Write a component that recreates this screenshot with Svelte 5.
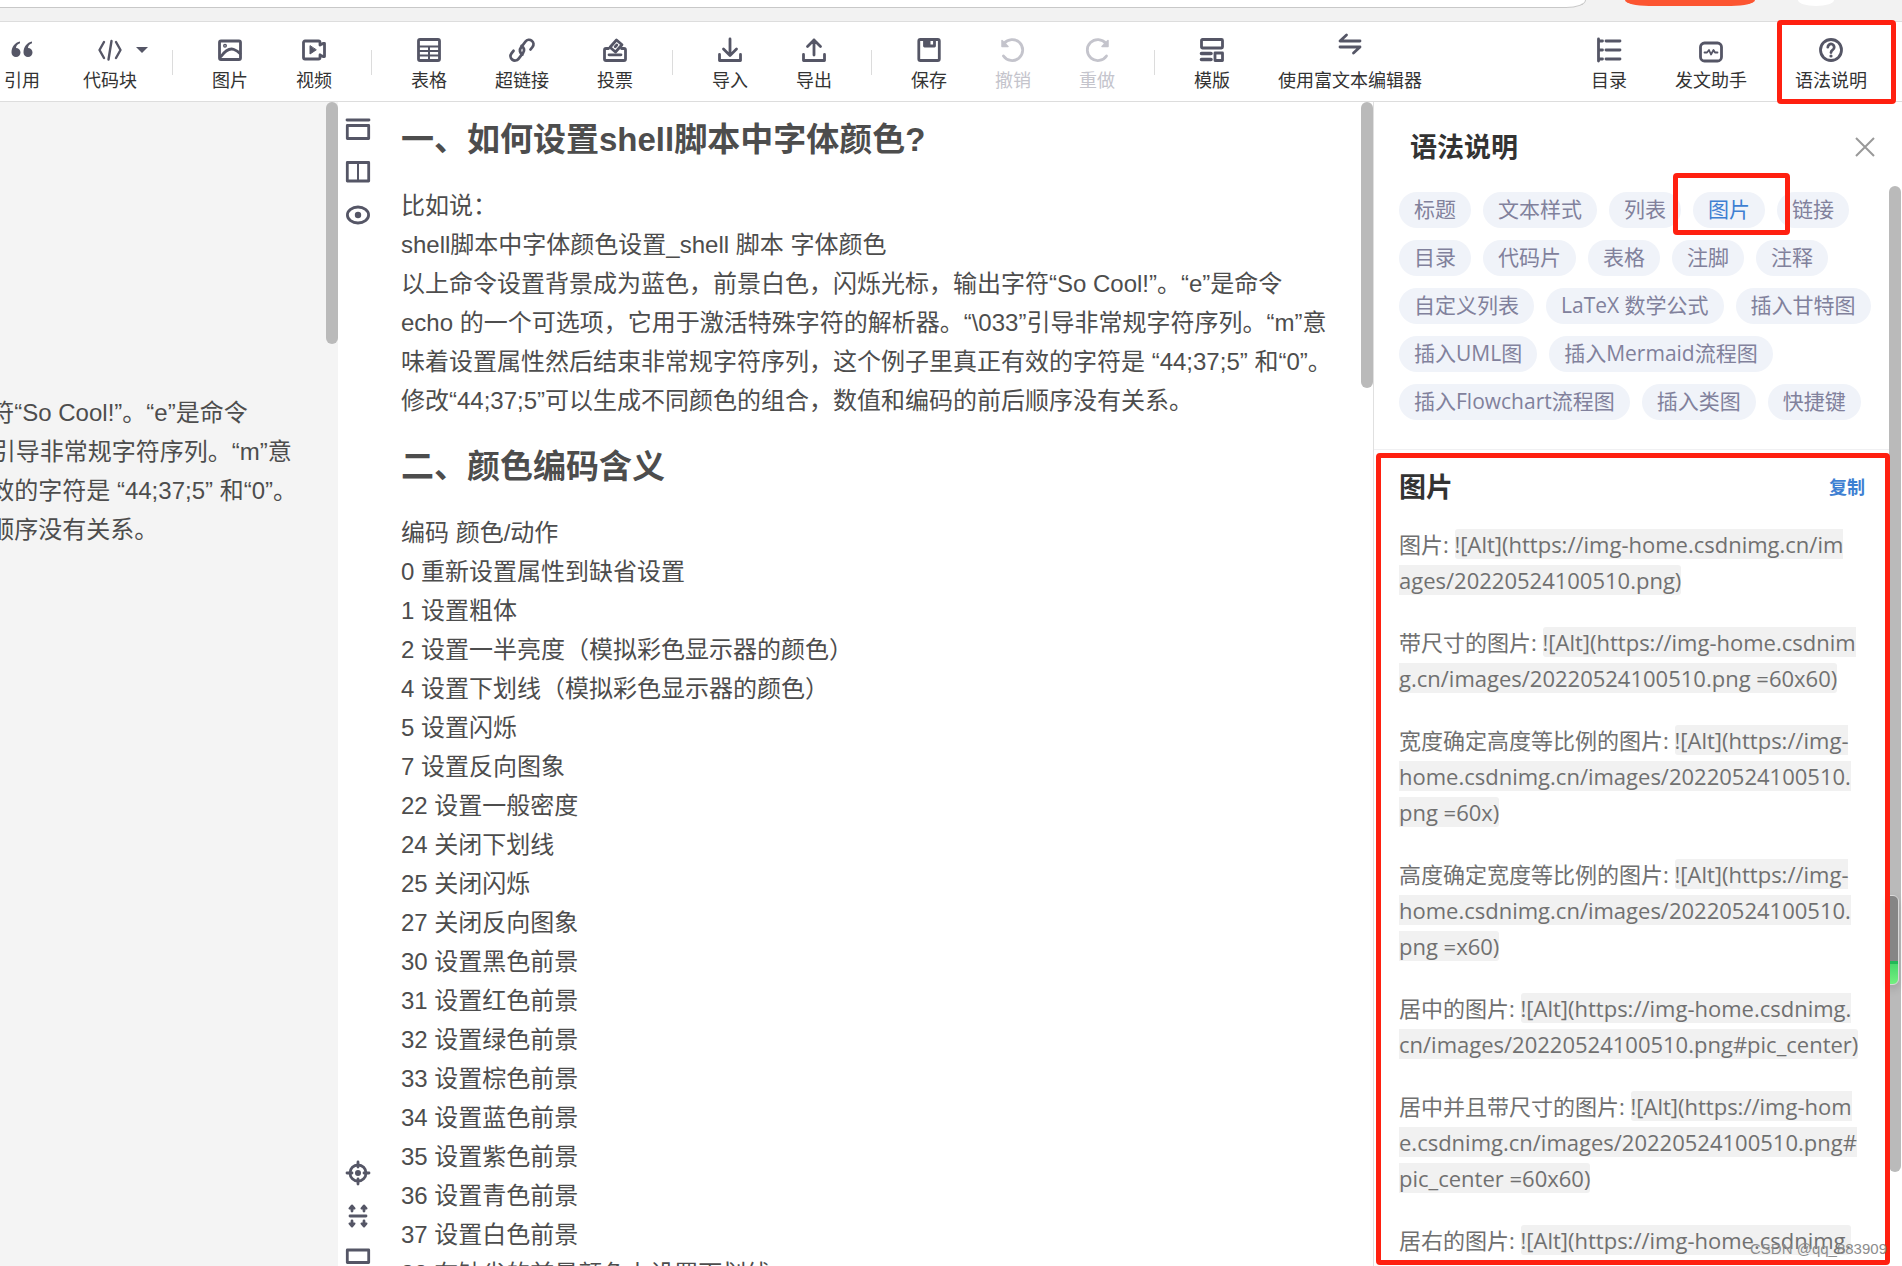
<script lang="ts">
	type Tool = { label: string; icon: string; disabled?: boolean; caret?: boolean; raised?: boolean; marked?: boolean };

	const icons: Record<string, string> = {
		quote:
			'<g fill="currentColor" stroke="none"><path d="M10 3.5C5 4.5 1.500 9 1.500 14.500a4.500 4.500 0 1 0 4.500-4.500C6.200 7.500 7.600 6 10 5.300z"/><path d="M22 3.500c-5 1-8.500 5.500-8.500 11a4.500 4.500 0 1 0 4.500-4.500c.2-2.500 1.600-4 4-4.700z"/></g>',
		code: '<path d="M6 4 1.500 12 6 20M18 4l4.500 8-4.500 8M13.500 3l-3 18.500" stroke-width="2.400"/>',
		image:
			'<rect x="1.500" y="3" width="21" height="18.500" rx="1.500"/><circle cx="7" cy="7.800" r="1.300" stroke-width="1.400"/><path d="M3 18.500c4-5.500 9-8.500 13-7 2.500 1 4.500 2.500 6 4"/>',
		video:
			'<path d="M18 7V4.500A1.500 1.500 0 0 0 16.500 3H3a1.500 1.500 0 0 0-1.500 1.500v15A1.500 1.500 0 0 0 3 21h13.500a1.500 1.500 0 0 0 1.500-1.500V17M18 7l3-1.500h1.500v13H21L18 17"/><path d="M8 8v8l6-4z" fill="currentColor" stroke-width="1"/>',
		table:
			'<rect x="1.500" y="1.500" width="21" height="21" rx="1.500"/><path d="M2 8.500h20M2 13h20M2 17.500h20M12 9v13" stroke-width="2"/>',
		link:
			'<path d="M12.500 16.500a4.500 4.500 0 0 1-1.500-7l4.500-6a4.400 4.400 0 0 1 7 5.500l-2 2.500M11.500 8a4.500 4.500 0 0 1 1.500 7l-4.500 5.800a4.400 4.400 0 0 1-7-5.500l2-2.500"/>',
		vote:
			'<path d="M5.500 10.500H3A1.500 1.500 0 0 0 1.500 12v9A1.500 1.500 0 0 0 3 22.500h18a1.500 1.500 0 0 0 1.500-1.500v-9a1.500 1.500 0 0 0-1.500-1.500h-2.500M6 16.800h12"/><path d="m13.500 2 5.500 4.700-6.500 7.300L7 9.300zM12.200 8.700l1.600-1.600"/>',
		import: '<path d="M12 1v16M5.500 11l6.500 6.500 6.500-6.500M1.500 16.500v6h21v-6"/>',
		export: '<path d="M12 17V2M5.500 8.500 12 2l6.500 6.500M1.500 16.500v6h21v-6"/>',
		save:
			'<rect x="1.800" y="1.500" width="20.500" height="21" rx="1.500"/><path d="M7.500 2v6h10V2"/><path d="M7.500 2h6v6h-6z" fill="currentColor" stroke="none"/>',
		undo: '<path d="M3 5.500a10.500 10.500 0 1 1-.5 12.500"/><path d="M1 2.500v6h6z" fill="currentColor" stroke-width="1.500"/>',
		redo: '<path d="M21 5.500a10.500 10.500 0 1 0 .5 12.500"/><path d="M23 2.500v6h-6z" fill="currentColor" stroke-width="1.500"/>',
		template:
			'<rect x="1.500" y="1.500" width="21" height="8.500" rx="1"/><path d="M1.500 15.500h9.500M1.500 21.500h9.500" stroke-width="3.600"/><rect x="15" y="15" width="7.500" height="7.500"/>',
		swap: '<path d="M22 9H2l6.500-6M2 15h20l-6.500 6"/>',
		toc: '<path d="M1.500 1v22M1.500 3h4M1.500 12h4M1.500 21h4M9 3h14M9 12h14M9 21h14"/>',
		assistant:
			'<rect x="1.500" y="5" width="21" height="18" rx="4"/><path d="M5.500 14.500H8l2-2.500 2 4.500 2.500-4.500 1.500 2.500h2.500" stroke-width="1.800"/>',
		help: '<circle cx="12" cy="12" r="10.500"/><path d="M8.800 9.200a3.200 3.200 0 1 1 4.900 2.700c-1.100.7-1.700 1.200-1.700 2.600"/><circle cx="12" cy="18" r="1.600" fill="currentColor" stroke="none"/>',
		header: '<path d="M1 3h22"/><rect x="1.300" y="8.500" width="21.400" height="13"/>',
		split: '<rect x="1.300" y="2.500" width="21.400" height="18.500"/><path d="M12 3v18" stroke-width="2"/>',
		eye: '<ellipse cx="12" cy="12" rx="10.600" ry="8"/><circle cx="12" cy="12" r="3.200" fill="currentColor" stroke="none"/>',
		target:
			'<circle cx="12" cy="12" r="8"/><circle cx="12" cy="12" r="3" fill="currentColor" stroke="none"/><path d="M12 1v5M12 18v5M1 12h5M18 12h5"/>',
		sync:
			'<path d="M4 12h16M6 7V3M18 7V3M6 17v4M18 17v4"/><path d="M6 1.500 3.500 4.500h5zM18 1.500l-2.500 3h5zM6 22.500l-2.500-3h5zM18 22.500l-2.500-3h5z" fill="currentColor" stroke-width="2"/>',
		rect: '<rect x="1.300" y="3" width="21.400" height="12.500"/>'
	};

	const groups: Tool[][] = [
		[
			{ label: '引用', icon: 'quote' },
			{ label: '代码块', icon: 'code', caret: true }
		],
		[
			{ label: '图片', icon: 'image' },
			{ label: '视频', icon: 'video' }
		],
		[
			{ label: '表格', icon: 'table' },
			{ label: '超链接', icon: 'link' },
			{ label: '投票', icon: 'vote' }
		],
		[
			{ label: '导入', icon: 'import' },
			{ label: '导出', icon: 'export' }
		],
		[
			{ label: '保存', icon: 'save' },
			{ label: '撤销', icon: 'undo', disabled: true },
			{ label: '重做', icon: 'redo', disabled: true }
		],
		[
			{ label: '模版', icon: 'template' },
			{ label: '使用富文本编辑器', icon: 'swap', raised: true }
		]
	];

	const rightTools: Tool[] = [
		{ label: '目录', icon: 'toc' },
		{ label: '发文助手', icon: 'assistant' },
		{ label: '语法说明', icon: 'help', marked: true }
	];

	const intro = [
		'比如说：',
		'shell脚本中字体颜色设置_shell 脚本 字体颜色',
		'以上命令设置背景成为蓝色，前景白色，闪烁光标，输出字符“So Cool!”。“e”是命令',
		'echo 的一个可选项，它用于激活特殊字符的解析器。“\\033”引导非常规字符序列。“m”意',
		'味着设置属性然后结束非常规字符序列，这个例子里真正有效的字符是 “44;37;5” 和“0”。',
		'修改“44;37;5”可以生成不同颜色的组合，数值和编码的前后顺序没有关系。'
	];
	const sourceLines = intro.slice(2);

	const codes = [
		'编码 颜色/动作',
		'0 重新设置属性到缺省设置',
		'1 设置粗体',
		'2 设置一半亮度（模拟彩色显示器的颜色）',
		'4 设置下划线（模拟彩色显示器的颜色）',
		'5 设置闪烁',
		'7 设置反向图象',
		'22 设置一般密度',
		'24 关闭下划线',
		'25 关闭闪烁',
		'27 关闭反向图象',
		'30 设置黑色前景',
		'31 设置红色前景',
		'32 设置绿色前景',
		'33 设置棕色前景',
		'34 设置蓝色前景',
		'35 设置紫色前景',
		'36 设置青色前景',
		'37 设置白色前景',
		'38 在缺省的前景颜色上设置下划线'
	];

	const topicRows = [
		['标题', '文本样式', '列表', '图片', '链接'],
		['目录', '代码片', '表格', '注脚', '注释'],
		['自定义列表', 'LaTeX 数学公式', '插入甘特图'],
		['插入UML图', '插入Mermaid流程图'],
		['插入Flowchart流程图', '插入类图', '快捷键']
	];
	let active = $state('图片');

	const samples = [
		{ label: '图片', code: '![Alt](https://img-home.csdnimg.cn/im\nages/20220524100510.png)' },
		{ label: '带尺寸的图片', code: '![Alt](https://img-home.csdnim\ng.cn/images/20220524100510.png =60x60)' },
		{ label: '宽度确定高度等比例的图片', code: '![Alt](https://img-\nhome.csdnimg.cn/images/20220524100510.\npng =60x)' },
		{ label: '高度确定宽度等比例的图片', code: '![Alt](https://img-\nhome.csdnimg.cn/images/20220524100510.\npng =x60)' },
		{ label: '居中的图片', code: '![Alt](https://img-home.csdnimg.\ncn/images/20220524100510.png#pic_center)' },
		{ label: '居中并且带尺寸的图片', code: '![Alt](https://img-hom\ne.csdnimg.cn/images/20220524100510.png#\npic_center =60x60)' },
		{ label: '居右的图片', code: '![Alt](https://img-home.csdnimg.' }
	];
</script>

{#snippet icon(name: string)}
	<svg class="icon" viewBox="0 0 24 24" aria-hidden="true">{@html icons[name]}</svg>
{/snippet}

{#snippet toolButton(tool: Tool)}
	<button class="tool" class:raised={tool.raised} class:with-caret={tool.caret} disabled={tool.disabled}>
		<span class="glyph">
			{@render icon(tool.icon)}
			{#if tool.caret}<span class="caret"></span>{/if}
		</span>
		<span>{tool.label}</span>
		{#if tool.marked}<span class="mark"></span>{/if}
	</button>
{/snippet}

<div class="page">
	<div class="browser-bar">
		<div class="address"></div>
		<div class="pill"></div>
		<div class="avatar"></div>
	</div>

	<header class="toolbar">
		{#each groups as group, i}
			{#if i > 0}<span class="divider"></span>{/if}
			{#each group as tool (tool.label)}
				{@render toolButton(tool)}
			{/each}
		{/each}
		<div class="right-tools">
			{#each rightTools as tool (tool.label)}
				{@render toolButton(tool)}
			{/each}
		</div>
	</header>

	<main>
		<section class="source">
			<p class="lines">{sourceLines.join('\n')}</p>
			<span class="thumb"></span>
		</section>

		<nav class="rail">
			<div class="rail-group">
				<button aria-label="标题栏">{@render icon('header')}</button>
				<button aria-label="分栏">{@render icon('split')}</button>
				<button aria-label="预览">{@render icon('eye')}</button>
			</div>
			<div class="rail-group bottom">
				<button aria-label="定位">{@render icon('target')}</button>
				<button aria-label="同步滚动">{@render icon('sync')}</button>
				<button aria-label="全屏">{@render icon('rect')}</button>
			</div>
		</nav>

		<article class="preview">
			<h1>一、如何设置shell脚本中字体颜色?</h1>
			<p class="lines">{intro.join('\n')}</p>
			<h1>二、颜色编码含义</h1>
			<p class="lines">{codes.join('\n')}</p>
			<span class="thumb long"></span>
		</article>

		<aside>
			<div class="aside-head">
				<h2>语法说明</h2>
				<button class="close" aria-label="关闭">
					<svg viewBox="0 0 20 20"><path d="M1 1l18 18M19 1 1 19" /></svg>
				</button>
			</div>
			<div class="aside-body">
				<div class="topics">
					{#each topicRows as row}
						<div class="topic-row">
							{#each row as topic (topic)}
								<button class="topic" class:active={topic === active} onclick={() => (active = topic)}>
									{topic}
									{#if topic === '图片'}<span class="mark"></span>{/if}
								</button>
							{/each}
						</div>
					{/each}
				</div>
				<section class="samples">
					<div class="samples-head">
						<h2>图片</h2>
						<button class="copy">复制</button>
					</div>
					{#each samples as s (s.label)}
						<p>{s.label}: <code>{s.code}</code></p>
					{/each}
				</section>
				<span class="thumb panel"></span>
			</div>
			<span class="meter"></span>
			<span class="mark body-mark"></span>
			<span class="watermark">CSDN @qq_883909</span>
		</aside>
	</main>
</div>

<style>
	:global(body) {
		margin: 0;
	}
	.page {
		height: 100vh;
		display: flex;
		flex-direction: column;
		overflow: hidden;
		background: #fff;
		color: #4d4d4d;
		font-family: 'Liberation Sans', 'Noto Sans CJK SC', sans-serif;
	}
	button {
		padding: 0;
		border: 0;
		background: none;
		color: inherit;
		font: inherit;
		cursor: pointer;
	}
	h1,
	h2,
	p {
		margin: 0;
	}
	.icon {
		display: block;
		width: 24px;
		height: 24px;
		fill: none;
		stroke: currentColor;
		stroke-width: 2.8;
		stroke-linecap: round;
		stroke-linejoin: round;
		overflow: visible;
	}

	.browser-bar {
		flex: none;
		display: flex;
		align-items: flex-start;
		height: 21px;
		background: #f2f2f2;
	}
	.address {
		flex: 1;
		height: 7px;
		background: #fff;
		border-bottom: 1px solid #c8c8c8;
		border-right: 1px solid #c8c8c8;
		border-bottom-right-radius: 20px 8px;
	}
	.pill {
		width: 130px;
		height: 6px;
		margin: 0 43px 0 39px;
		background: #fc5531;
		border-radius: 0 0 24px 24px / 0 0 6px 6px;
	}
	.avatar {
		width: 36px;
		height: 6px;
		margin-right: 68px;
		background: #fff;
		border-radius: 0 0 18px 18px / 0 0 6px 6px;
	}

	.toolbar {
		flex: none;
		display: flex;
		align-items: flex-start;
		height: 79px;
		border-top: 1px solid #ddd;
		border-bottom: 1px solid #ddd;
	}
	.tool {
		position: relative;
		flex: none;
		display: flex;
		flex-direction: column;
		align-items: center;
		gap: 7px;
		padding: 16px 24px 0;
		color: #333;
		font-size: 18px;
		line-height: 24px;
	}
	.tool:first-child {
		padding-left: 4px;
	}
	.right-tools .tool:first-child {
		padding-left: 24px;
	}
	.tool.with-caret {
		padding-left: 19px;
		padding-right: 20px;
	}
	.tool.raised .glyph {
		margin: -6px 0 6px;
	}
	.glyph {
		position: relative;
		color: #555666;
	}
	.tool:disabled,
	.tool:disabled .glyph {
		color: #c4c4cc;
	}
	.caret {
		position: absolute;
		left: 38px;
		top: 9px;
		border: 6px solid transparent;
		border-top-color: #555666;
		border-bottom: 0;
	}
	.divider {
		flex: none;
		width: 1px;
		height: 25px;
		margin: 28px 15px 0;
		background: #dcdcdc;
	}
	.right-tools {
		display: flex;
		margin-left: auto;
		padding-right: 11px;
	}
	.mark {
		position: absolute;
		box-sizing: border-box;
		border: 5px solid #ff2010;
		border-radius: 4px;
		pointer-events: none;
		z-index: 2;
	}
	.tool .mark {
		inset: -2px -5px -11px 6px;
	}

	main {
		flex: 1;
		min-height: 0;
		display: flex;
	}
	.lines {
		font-size: 24px;
		line-height: 39px;
		white-space: pre;
	}
	.thumb {
		position: absolute;
		top: 0;
		right: 0;
		width: 12px;
		height: 242px;
		border-radius: 6px;
		background: #bababa;
	}
	.thumb.long {
		height: 286px;
	}
	.source {
		position: relative;
		flex: none;
		box-sizing: border-box;
		width: 338px;
		padding: 291px 41px 0 0;
		display: flex;
		justify-content: flex-end;
		overflow: hidden;
		background: #f4f4f4;
	}
	.rail {
		flex: none;
		width: 40px;
		display: flex;
		flex-direction: column;
		justify-content: space-between;
		align-items: center;
		padding-top: 15px;
		box-sizing: border-box;
		color: #555666;
	}
	.rail-group {
		display: grid;
		gap: 19px;
	}
	.rail-group.bottom {
		margin-bottom: -5px;
	}
	.preview {
		position: relative;
		flex: 1;
		min-width: 0;
		padding: 11px 12px 0 23px;
		overflow: hidden;
	}
	h1 {
		margin: 20px 0;
		font-size: 33px;
		line-height: 53px;
	}
	h1:first-child {
		margin-top: 0;
	}

	aside {
		position: relative;
		flex: none;
		box-sizing: border-box;
		width: 529px;
		display: flex;
		flex-direction: column;
		border-left: 1px solid #e0e0e0;
		font-family: 'Open Sans', 'Noto Sans CJK SC', sans-serif;
	}
	.aside-head {
		flex: none;
		display: flex;
		justify-content: space-between;
		align-items: center;
		height: 84px;
		padding: 6px 27px 0 36px;
		box-sizing: border-box;
	}
	h2 {
		color: #333;
		font-size: 27px;
		line-height: 36px;
	}
	.close svg {
		display: block;
		width: 20px;
		height: 20px;
		stroke: #999;
		stroke-width: 2;
	}
	.aside-body {
		position: relative;
		flex: 1;
		min-height: 0;
		padding-right: 13px;
	}
	.topics {
		display: grid;
		gap: 12px;
		padding: 6px 0 29px 25px;
		border-bottom: 1px solid #f0f0f2;
	}
	.topic-row {
		display: flex;
		gap: 12px;
	}
	.topic {
		position: relative;
		flex: none;
		height: 36px;
		padding: 0 15px 2px;
		border-radius: 18px;
		background: #f0f3f9;
		color: #81819c;
		font-size: 21px;
		line-height: 34px;
		white-space: nowrap;
	}
	.topic.active {
		color: #3e7fd2;
	}
	.topic .mark {
		inset: -19px -25px -7px -20px;
	}
	.samples {
		height: calc(100% - 264px);
		padding: 19px 24px 0 25px;
		overflow: hidden;
		box-sizing: border-box;
	}
	.samples-head {
		display: flex;
		justify-content: space-between;
		align-items: center;
		margin-bottom: 21px;
	}
	.copy {
		color: #3e7fd2;
		font-size: 18px;
		font-weight: bold;
		line-height: 24px;
	}
	.samples p {
		margin-bottom: 26px;
		color: #707070;
		font-size: 22px;
		line-height: 36px;
		white-space: pre;
	}
	code {
		border-radius: 3px;
		background: #f1f1f1;
		font-family: inherit;
	}
	.thumb.panel {
		right: 1px;
		height: 986px;
	}
	.body-mark {
		inset: 351px 12px 1px 2px;
	}
	.meter {
		position: absolute;
		right: 3px;
		top: 793px;
		width: 9px;
		height: 88px;
		border: 1px solid #d8d8d8;
		border-radius: 0 6px 6px 0;
		background: linear-gradient(#858585 0 74%, #20b858 74% 77%, #48d86c 77%, #74f080);
		box-shadow: 0 4px 8px rgba(0, 0, 0, 0.15);
	}
	.watermark {
		position: absolute;
		right: 15px;
		bottom: 7px;
		z-index: 3;
		color: #8c8c8c;
		font-family: 'Liberation Sans', sans-serif;
		font-size: 15px;
		line-height: 20px;
	}
</style>
